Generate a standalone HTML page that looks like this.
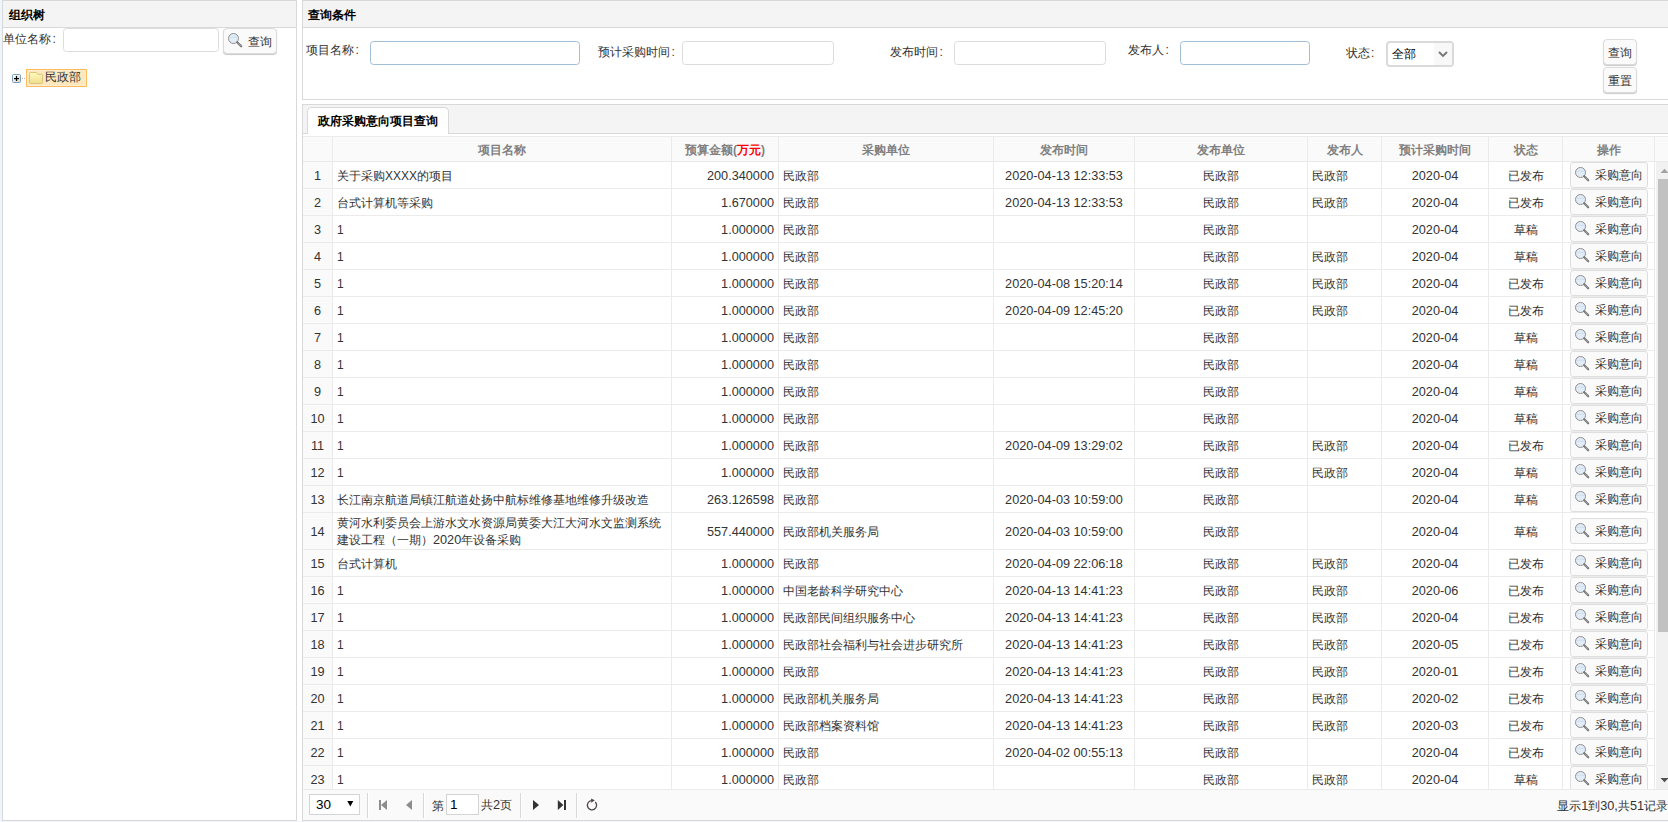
<!DOCTYPE html><html><head><meta charset="utf-8"><style>
*{box-sizing:border-box;margin:0;padding:0}
html,body{width:1668px;height:822px;overflow:hidden;background:#fff;font-family:"Liberation Sans",sans-serif;font-size:12px;color:#333}
.a{position:absolute}
.n{font-size:12.7px}
.pnl{position:absolute;background:#fff;border:1px solid #d9d9d9}
.ph{position:absolute;left:0;top:0;right:0;height:27px;background:#f4f4f4;border-bottom:1px solid #d9d9d9}
.pt{position:absolute;font-weight:bold;color:#000;line-height:14px;white-space:nowrap}
.lbl{position:absolute;line-height:14px;white-space:nowrap;color:#333}
.inp{position:absolute;border:1px solid #dcdcdc;border-radius:3.5px;background:#fff}
.inp.f{border-color:#a2bdd6}
.co{margin-left:1.5px}
.btn{position:absolute;border:1px solid #dcdcdc;border-radius:4px;background:#fafafa;box-shadow:0 1px 1px #c8c8c8;white-space:nowrap;line-height:14px;color:#333}
.hd{position:absolute;top:138px;height:24px;line-height:24px;text-align:center;font-weight:bold;color:#808080;white-space:nowrap;overflow:hidden}
.vl{position:absolute;width:1px;background:#ebebeb}
.hl{position:absolute;height:1px;background:#ebebeb}
.c{position:absolute;white-space:nowrap;overflow:hidden;color:#333;padding:0 4px}
.ob{position:absolute;border:1px solid #dedede;border-radius:3px;background:#fafafa;line-height:14px;white-space:nowrap;color:#333}
.mag{position:absolute}
.ps{position:absolute;width:1px;background:#d8d8d8;border-right:1px solid #fff;width:2px}
</style></head><body>

<div class="pnl" style="left:2px;top:0;width:295px;height:821px">
<div class="ph"></div>
<div class="pt" style="left:6px;top:7px">组织树</div>
<div class="lbl" style="left:0px;top:31px">单位名称<span class=co>:</span></div>
<div class="inp" style="left:60px;top:27px;width:156px;height:24px"></div>
<div class="btn" style="left:220px;top:27px;width:54px;height:26px"><svg class="mag" style="left:3px;top:3px" width="16" height="16" viewBox="0 0 16 16"><circle cx="6.5" cy="6.5" r="5" fill="#e2ecf7" stroke="#8e8e8e" stroke-width="1.0"/><path d="M3 5.5 Q6.5 4.6 10 5.5" stroke="#c6d9ec" stroke-width="0.8" fill="none"/><path d="M10.2 10.2 L14.2 14.3" stroke="#767676" stroke-width="2.2" stroke-linecap="round"/><path d="M10.9 10.9 L13.9 14" stroke="#d8d8e8" stroke-width="0.8" stroke-dasharray="0.7 0.9"/></svg><span style="position:absolute;left:24px;top:6px">查询</span></div>
</div>
<svg class="a" style="left:12px;top:74px" width="9" height="9" viewBox="0 0 9 9"><defs><linearGradient id="pg" x1="0" y1="0" x2="1" y2="1"><stop offset="0" stop-color="#ffffff"/><stop offset="1" stop-color="#dcd3c4"/></linearGradient></defs><rect x="0.5" y="0.5" width="8" height="8" rx="1" fill="url(#pg)" stroke="#7b9dc2" stroke-width="1"/><rect x="2" y="4" width="5" height="1.2" fill="#000"/><rect x="3.9" y="2" width="1.2" height="5" fill="#000"/></svg>
<div class="a" style="left:22px;top:78px;width:1px;height:1px;background:#b0b0b0"></div><div class="a" style="left:24px;top:78px;width:1px;height:1px;background:#b0b0b0"></div>
<div class="a" style="left:26px;top:69px;width:61px;height:18px;background:#fde8bd;border:1px solid #ffbb60;box-shadow:inset 0 0 0 1px #fdedd0"></div>
<svg class="a" style="left:29px;top:72px" width="14" height="12" viewBox="0 0 14 12"><defs><linearGradient id="fg" x1="0" y1="0" x2="0" y2="1"><stop offset="0" stop-color="#fffcc0"/><stop offset="1" stop-color="#f0dc8c"/></linearGradient></defs><path d="M0.5 1.3 Q0.5 0.5 1.3 0.5 L7.3 0.5 L8.6 2.3 L12.7 2.3 Q13.5 2.3 13.5 3.1 L13.5 10.7 Q13.5 11.5 12.7 11.5 L1.3 11.5 Q0.5 11.5 0.5 10.7 Z" fill="url(#fg)" stroke="#dcc47c" stroke-width="1"/></svg>
<div class="lbl" style="left:45.3px;top:70px">民政部</div>
<div class="pnl" style="left:302px;top:0;width:1380px;height:100px">
<div class="ph"></div>
<div class="pt" style="left:5px;top:7px">查询条件</div>
<div class="lbl" style="left:3px;top:41.5px">项目名称<span class=co>:</span></div>
<div class="inp f" style="left:67px;top:40px;width:210px;height:24px"></div>
<div class="lbl" style="left:295px;top:43.5px">预计采购时间<span class=co>:</span></div>
<div class="inp" style="left:379px;top:40px;width:152px;height:24px"></div>
<div class="lbl" style="left:587px;top:43.5px">发布时间<span class=co>:</span></div>
<div class="inp" style="left:651px;top:40px;width:152px;height:24px"></div>
<div class="lbl" style="left:825px;top:41.5px">发布人<span class=co>:</span></div>
<div class="inp f" style="left:877px;top:40px;width:130px;height:24px"></div>
<div class="lbl" style="left:1043px;top:45px">状态<span class=co style="margin-left:1px">:</span></div>
<div class="a" style="left:1083px;top:40px;width:68px;height:26px;border:2px solid #dadada;border-radius:4px;background:#fff"><div class="a" style="left:46px;top:0;width:18px;height:22px;background:#f8f8f8"></div><div class="lbl" style="left:4px;top:3.5px;color:#000">全部</div><svg class="a" style="left:50px;top:8px" width="11" height="7" viewBox="0 0 11 7"><path d="M1 1 L5 5 L9 1" stroke="#777" stroke-width="1.9" fill="none"/></svg></div>
<div class="btn" style="left:1300px;top:38px;width:34px;height:26px"><span style="position:absolute;left:4px;top:6px">查询</span></div>
<div class="btn" style="left:1300px;top:66px;width:34px;height:26px"><span style="position:absolute;left:4px;top:6px">重置</span></div>
</div>
<div class="pnl" style="left:302px;top:104px;width:1380px;height:717px;border-right:none"></div>
<div class="a" style="left:303px;top:105px;width:1365px;height:29px;background:#f4f4f4;border-bottom:1px solid #d9d9d9"></div>
<div class="a" style="left:307px;top:107px;width:142px;height:27px;background:#fff;border:1px solid #d9d9d9;border-bottom:none;border-radius:5px 5px 0 0"></div>
<div class="pt" style="left:318px;top:114px">政府采购意向项目查询</div>
<div class="a" style="left:303px;top:136px;width:1365px;height:26px;background:#fafafa;border-top:1px solid #ebebeb;border-bottom:1px solid #e9e9e9"></div>
<div class="hd" style="left:303px;width:29px"></div>
<div class="hd" style="left:333px;width:338px">项目名称</div>
<div class="hd" style="left:672px;width:106px">预算金额(<span style="color:#f00">万元</span>)</div>
<div class="hd" style="left:779px;width:214px">采购单位</div>
<div class="hd" style="left:994px;width:140px">发布时间</div>
<div class="hd" style="left:1135px;width:172px">发布单位</div>
<div class="hd" style="left:1308px;width:73px">发布人</div>
<div class="hd" style="left:1382px;width:106px">预计采购时间</div>
<div class="hd" style="left:1489px;width:73px">状态</div>
<div class="hd" style="left:1563px;width:91px">操作</div>
<div class="a" style="left:303px;top:162px;width:29px;height:627px;background:#fafafa"></div>
<div class="a" style="left:1655px;top:162px;width:13px;height:627px;background:#f1f1f1;border-left:1px solid #fff"></div>
<svg class="a" style="left:1660px;top:168px" width="8" height="5" viewBox="0 0 8 5"><path d="M0.5 5 L4.5 0.8 L8.5 5 Z" fill="#a3a3a3"/></svg>
<div class="a" style="left:1658px;top:179px;width:10px;height:453px;background:#c1c1c1"></div>
<svg class="a" style="left:1660px;top:778px" width="8" height="5" viewBox="0 0 8 5"><path d="M0.5 0 L4.5 4.2 L8.5 0 Z" fill="#505050"/></svg>
<div class="hl" style="left:303px;top:188px;width:1352px"></div>
<div class="hl" style="left:303px;top:215px;width:1352px"></div>
<div class="hl" style="left:303px;top:242px;width:1352px"></div>
<div class="hl" style="left:303px;top:269px;width:1352px"></div>
<div class="hl" style="left:303px;top:296px;width:1352px"></div>
<div class="hl" style="left:303px;top:323px;width:1352px"></div>
<div class="hl" style="left:303px;top:350px;width:1352px"></div>
<div class="hl" style="left:303px;top:377px;width:1352px"></div>
<div class="hl" style="left:303px;top:404px;width:1352px"></div>
<div class="hl" style="left:303px;top:431px;width:1352px"></div>
<div class="hl" style="left:303px;top:458px;width:1352px"></div>
<div class="hl" style="left:303px;top:485px;width:1352px"></div>
<div class="hl" style="left:303px;top:512px;width:1352px"></div>
<div class="hl" style="left:303px;top:549px;width:1352px"></div>
<div class="hl" style="left:303px;top:576px;width:1352px"></div>
<div class="hl" style="left:303px;top:603px;width:1352px"></div>
<div class="hl" style="left:303px;top:630px;width:1352px"></div>
<div class="hl" style="left:303px;top:657px;width:1352px"></div>
<div class="hl" style="left:303px;top:684px;width:1352px"></div>
<div class="hl" style="left:303px;top:711px;width:1352px"></div>
<div class="hl" style="left:303px;top:738px;width:1352px"></div>
<div class="hl" style="left:303px;top:765px;width:1352px"></div>
<div class="hl" style="left:303px;top:792px;width:1352px"></div>
<div class="vl" style="left:332px;top:137px;height:652px;"></div>
<div class="vl" style="left:671px;top:137px;height:652px;"></div>
<div class="vl" style="left:778px;top:137px;height:652px;"></div>
<div class="vl" style="left:993px;top:137px;height:652px;"></div>
<div class="vl" style="left:1134px;top:137px;height:652px;"></div>
<div class="vl" style="left:1307px;top:137px;height:652px;"></div>
<div class="vl" style="left:1381px;top:137px;height:652px;"></div>
<div class="vl" style="left:1488px;top:137px;height:652px;"></div>
<div class="vl" style="left:1562px;top:137px;height:652px;"></div>
<div class="vl" style="left:1654px;top:137px;height:652px;"></div>
<div class="c" style="left:303px;top:163px;width:29px;height:25px;line-height:26px;text-align:center"><span class=n>1</span></div>
<div class="c" style="left:333px;top:163px;width:338px;height:25px;line-height:26px;text-align:left">关于采购XXXX的项目</div>
<div class="c" style="left:672px;top:163px;width:106px;height:25px;line-height:26px;text-align:right"><span class=n>200.340000</span></div>
<div class="c" style="left:779px;top:163px;width:214px;height:25px;line-height:26px;text-align:left">民政部</div>
<div class="c" style="left:994px;top:163px;width:140px;height:25px;line-height:26px;text-align:center"><span class=n>2020-04-13 12:33:53</span></div>
<div class="c" style="left:1135px;top:163px;width:172px;height:25px;line-height:26px;text-align:center">民政部</div>
<div class="c" style="left:1308px;top:163px;width:73px;height:25px;line-height:26px;text-align:left">民政部</div>
<div class="c" style="left:1382px;top:163px;width:106px;height:25px;line-height:26px;text-align:center"><span class=n>2020-04</span></div>
<div class="c" style="left:1489px;top:163px;width:73px;height:25px;line-height:26px;text-align:center">已发布</div>
<div class="ob" style="left:1570px;top:162px;width:78px;height:26px"><svg class="mag" style="left:3px;top:3px" width="16" height="16" viewBox="0 0 16 16"><circle cx="6.5" cy="6.5" r="5" fill="#e2ecf7" stroke="#8e8e8e" stroke-width="1.0"/><path d="M3 5.5 Q6.5 4.6 10 5.5" stroke="#c6d9ec" stroke-width="0.8" fill="none"/><path d="M10.2 10.2 L14.2 14.3" stroke="#767676" stroke-width="2.2" stroke-linecap="round"/><path d="M10.9 10.9 L13.9 14" stroke="#d8d8e8" stroke-width="0.8" stroke-dasharray="0.7 0.9"/></svg><span style="position:absolute;left:24px;top:5px">采购意向</span></div>
<div class="c" style="left:303px;top:190px;width:29px;height:25px;line-height:26px;text-align:center"><span class=n>2</span></div>
<div class="c" style="left:333px;top:190px;width:338px;height:25px;line-height:26px;text-align:left">台式计算机等采购</div>
<div class="c" style="left:672px;top:190px;width:106px;height:25px;line-height:26px;text-align:right"><span class=n>1.670000</span></div>
<div class="c" style="left:779px;top:190px;width:214px;height:25px;line-height:26px;text-align:left">民政部</div>
<div class="c" style="left:994px;top:190px;width:140px;height:25px;line-height:26px;text-align:center"><span class=n>2020-04-13 12:33:53</span></div>
<div class="c" style="left:1135px;top:190px;width:172px;height:25px;line-height:26px;text-align:center">民政部</div>
<div class="c" style="left:1308px;top:190px;width:73px;height:25px;line-height:26px;text-align:left">民政部</div>
<div class="c" style="left:1382px;top:190px;width:106px;height:25px;line-height:26px;text-align:center"><span class=n>2020-04</span></div>
<div class="c" style="left:1489px;top:190px;width:73px;height:25px;line-height:26px;text-align:center">已发布</div>
<div class="ob" style="left:1570px;top:189px;width:78px;height:26px"><svg class="mag" style="left:3px;top:3px" width="16" height="16" viewBox="0 0 16 16"><circle cx="6.5" cy="6.5" r="5" fill="#e2ecf7" stroke="#8e8e8e" stroke-width="1.0"/><path d="M3 5.5 Q6.5 4.6 10 5.5" stroke="#c6d9ec" stroke-width="0.8" fill="none"/><path d="M10.2 10.2 L14.2 14.3" stroke="#767676" stroke-width="2.2" stroke-linecap="round"/><path d="M10.9 10.9 L13.9 14" stroke="#d8d8e8" stroke-width="0.8" stroke-dasharray="0.7 0.9"/></svg><span style="position:absolute;left:24px;top:5px">采购意向</span></div>
<div class="c" style="left:303px;top:217px;width:29px;height:25px;line-height:26px;text-align:center"><span class=n>3</span></div>
<div class="c" style="left:333px;top:217px;width:338px;height:25px;line-height:26px;text-align:left">1</div>
<div class="c" style="left:672px;top:217px;width:106px;height:25px;line-height:26px;text-align:right"><span class=n>1.000000</span></div>
<div class="c" style="left:779px;top:217px;width:214px;height:25px;line-height:26px;text-align:left">民政部</div>
<div class="c" style="left:994px;top:217px;width:140px;height:25px;line-height:26px;text-align:center"></div>
<div class="c" style="left:1135px;top:217px;width:172px;height:25px;line-height:26px;text-align:center">民政部</div>
<div class="c" style="left:1308px;top:217px;width:73px;height:25px;line-height:26px;text-align:left"></div>
<div class="c" style="left:1382px;top:217px;width:106px;height:25px;line-height:26px;text-align:center"><span class=n>2020-04</span></div>
<div class="c" style="left:1489px;top:217px;width:73px;height:25px;line-height:26px;text-align:center">草稿</div>
<div class="ob" style="left:1570px;top:216px;width:78px;height:26px"><svg class="mag" style="left:3px;top:3px" width="16" height="16" viewBox="0 0 16 16"><circle cx="6.5" cy="6.5" r="5" fill="#e2ecf7" stroke="#8e8e8e" stroke-width="1.0"/><path d="M3 5.5 Q6.5 4.6 10 5.5" stroke="#c6d9ec" stroke-width="0.8" fill="none"/><path d="M10.2 10.2 L14.2 14.3" stroke="#767676" stroke-width="2.2" stroke-linecap="round"/><path d="M10.9 10.9 L13.9 14" stroke="#d8d8e8" stroke-width="0.8" stroke-dasharray="0.7 0.9"/></svg><span style="position:absolute;left:24px;top:5px">采购意向</span></div>
<div class="c" style="left:303px;top:244px;width:29px;height:25px;line-height:26px;text-align:center"><span class=n>4</span></div>
<div class="c" style="left:333px;top:244px;width:338px;height:25px;line-height:26px;text-align:left">1</div>
<div class="c" style="left:672px;top:244px;width:106px;height:25px;line-height:26px;text-align:right"><span class=n>1.000000</span></div>
<div class="c" style="left:779px;top:244px;width:214px;height:25px;line-height:26px;text-align:left">民政部</div>
<div class="c" style="left:994px;top:244px;width:140px;height:25px;line-height:26px;text-align:center"></div>
<div class="c" style="left:1135px;top:244px;width:172px;height:25px;line-height:26px;text-align:center">民政部</div>
<div class="c" style="left:1308px;top:244px;width:73px;height:25px;line-height:26px;text-align:left">民政部</div>
<div class="c" style="left:1382px;top:244px;width:106px;height:25px;line-height:26px;text-align:center"><span class=n>2020-04</span></div>
<div class="c" style="left:1489px;top:244px;width:73px;height:25px;line-height:26px;text-align:center">草稿</div>
<div class="ob" style="left:1570px;top:243px;width:78px;height:26px"><svg class="mag" style="left:3px;top:3px" width="16" height="16" viewBox="0 0 16 16"><circle cx="6.5" cy="6.5" r="5" fill="#e2ecf7" stroke="#8e8e8e" stroke-width="1.0"/><path d="M3 5.5 Q6.5 4.6 10 5.5" stroke="#c6d9ec" stroke-width="0.8" fill="none"/><path d="M10.2 10.2 L14.2 14.3" stroke="#767676" stroke-width="2.2" stroke-linecap="round"/><path d="M10.9 10.9 L13.9 14" stroke="#d8d8e8" stroke-width="0.8" stroke-dasharray="0.7 0.9"/></svg><span style="position:absolute;left:24px;top:5px">采购意向</span></div>
<div class="c" style="left:303px;top:271px;width:29px;height:25px;line-height:26px;text-align:center"><span class=n>5</span></div>
<div class="c" style="left:333px;top:271px;width:338px;height:25px;line-height:26px;text-align:left">1</div>
<div class="c" style="left:672px;top:271px;width:106px;height:25px;line-height:26px;text-align:right"><span class=n>1.000000</span></div>
<div class="c" style="left:779px;top:271px;width:214px;height:25px;line-height:26px;text-align:left">民政部</div>
<div class="c" style="left:994px;top:271px;width:140px;height:25px;line-height:26px;text-align:center"><span class=n>2020-04-08 15:20:14</span></div>
<div class="c" style="left:1135px;top:271px;width:172px;height:25px;line-height:26px;text-align:center">民政部</div>
<div class="c" style="left:1308px;top:271px;width:73px;height:25px;line-height:26px;text-align:left">民政部</div>
<div class="c" style="left:1382px;top:271px;width:106px;height:25px;line-height:26px;text-align:center"><span class=n>2020-04</span></div>
<div class="c" style="left:1489px;top:271px;width:73px;height:25px;line-height:26px;text-align:center">已发布</div>
<div class="ob" style="left:1570px;top:270px;width:78px;height:26px"><svg class="mag" style="left:3px;top:3px" width="16" height="16" viewBox="0 0 16 16"><circle cx="6.5" cy="6.5" r="5" fill="#e2ecf7" stroke="#8e8e8e" stroke-width="1.0"/><path d="M3 5.5 Q6.5 4.6 10 5.5" stroke="#c6d9ec" stroke-width="0.8" fill="none"/><path d="M10.2 10.2 L14.2 14.3" stroke="#767676" stroke-width="2.2" stroke-linecap="round"/><path d="M10.9 10.9 L13.9 14" stroke="#d8d8e8" stroke-width="0.8" stroke-dasharray="0.7 0.9"/></svg><span style="position:absolute;left:24px;top:5px">采购意向</span></div>
<div class="c" style="left:303px;top:298px;width:29px;height:25px;line-height:26px;text-align:center"><span class=n>6</span></div>
<div class="c" style="left:333px;top:298px;width:338px;height:25px;line-height:26px;text-align:left">1</div>
<div class="c" style="left:672px;top:298px;width:106px;height:25px;line-height:26px;text-align:right"><span class=n>1.000000</span></div>
<div class="c" style="left:779px;top:298px;width:214px;height:25px;line-height:26px;text-align:left">民政部</div>
<div class="c" style="left:994px;top:298px;width:140px;height:25px;line-height:26px;text-align:center"><span class=n>2020-04-09 12:45:20</span></div>
<div class="c" style="left:1135px;top:298px;width:172px;height:25px;line-height:26px;text-align:center">民政部</div>
<div class="c" style="left:1308px;top:298px;width:73px;height:25px;line-height:26px;text-align:left">民政部</div>
<div class="c" style="left:1382px;top:298px;width:106px;height:25px;line-height:26px;text-align:center"><span class=n>2020-04</span></div>
<div class="c" style="left:1489px;top:298px;width:73px;height:25px;line-height:26px;text-align:center">已发布</div>
<div class="ob" style="left:1570px;top:297px;width:78px;height:26px"><svg class="mag" style="left:3px;top:3px" width="16" height="16" viewBox="0 0 16 16"><circle cx="6.5" cy="6.5" r="5" fill="#e2ecf7" stroke="#8e8e8e" stroke-width="1.0"/><path d="M3 5.5 Q6.5 4.6 10 5.5" stroke="#c6d9ec" stroke-width="0.8" fill="none"/><path d="M10.2 10.2 L14.2 14.3" stroke="#767676" stroke-width="2.2" stroke-linecap="round"/><path d="M10.9 10.9 L13.9 14" stroke="#d8d8e8" stroke-width="0.8" stroke-dasharray="0.7 0.9"/></svg><span style="position:absolute;left:24px;top:5px">采购意向</span></div>
<div class="c" style="left:303px;top:325px;width:29px;height:25px;line-height:26px;text-align:center"><span class=n>7</span></div>
<div class="c" style="left:333px;top:325px;width:338px;height:25px;line-height:26px;text-align:left">1</div>
<div class="c" style="left:672px;top:325px;width:106px;height:25px;line-height:26px;text-align:right"><span class=n>1.000000</span></div>
<div class="c" style="left:779px;top:325px;width:214px;height:25px;line-height:26px;text-align:left">民政部</div>
<div class="c" style="left:994px;top:325px;width:140px;height:25px;line-height:26px;text-align:center"></div>
<div class="c" style="left:1135px;top:325px;width:172px;height:25px;line-height:26px;text-align:center">民政部</div>
<div class="c" style="left:1308px;top:325px;width:73px;height:25px;line-height:26px;text-align:left"></div>
<div class="c" style="left:1382px;top:325px;width:106px;height:25px;line-height:26px;text-align:center"><span class=n>2020-04</span></div>
<div class="c" style="left:1489px;top:325px;width:73px;height:25px;line-height:26px;text-align:center">草稿</div>
<div class="ob" style="left:1570px;top:324px;width:78px;height:26px"><svg class="mag" style="left:3px;top:3px" width="16" height="16" viewBox="0 0 16 16"><circle cx="6.5" cy="6.5" r="5" fill="#e2ecf7" stroke="#8e8e8e" stroke-width="1.0"/><path d="M3 5.5 Q6.5 4.6 10 5.5" stroke="#c6d9ec" stroke-width="0.8" fill="none"/><path d="M10.2 10.2 L14.2 14.3" stroke="#767676" stroke-width="2.2" stroke-linecap="round"/><path d="M10.9 10.9 L13.9 14" stroke="#d8d8e8" stroke-width="0.8" stroke-dasharray="0.7 0.9"/></svg><span style="position:absolute;left:24px;top:5px">采购意向</span></div>
<div class="c" style="left:303px;top:352px;width:29px;height:25px;line-height:26px;text-align:center"><span class=n>8</span></div>
<div class="c" style="left:333px;top:352px;width:338px;height:25px;line-height:26px;text-align:left">1</div>
<div class="c" style="left:672px;top:352px;width:106px;height:25px;line-height:26px;text-align:right"><span class=n>1.000000</span></div>
<div class="c" style="left:779px;top:352px;width:214px;height:25px;line-height:26px;text-align:left">民政部</div>
<div class="c" style="left:994px;top:352px;width:140px;height:25px;line-height:26px;text-align:center"></div>
<div class="c" style="left:1135px;top:352px;width:172px;height:25px;line-height:26px;text-align:center">民政部</div>
<div class="c" style="left:1308px;top:352px;width:73px;height:25px;line-height:26px;text-align:left"></div>
<div class="c" style="left:1382px;top:352px;width:106px;height:25px;line-height:26px;text-align:center"><span class=n>2020-04</span></div>
<div class="c" style="left:1489px;top:352px;width:73px;height:25px;line-height:26px;text-align:center">草稿</div>
<div class="ob" style="left:1570px;top:351px;width:78px;height:26px"><svg class="mag" style="left:3px;top:3px" width="16" height="16" viewBox="0 0 16 16"><circle cx="6.5" cy="6.5" r="5" fill="#e2ecf7" stroke="#8e8e8e" stroke-width="1.0"/><path d="M3 5.5 Q6.5 4.6 10 5.5" stroke="#c6d9ec" stroke-width="0.8" fill="none"/><path d="M10.2 10.2 L14.2 14.3" stroke="#767676" stroke-width="2.2" stroke-linecap="round"/><path d="M10.9 10.9 L13.9 14" stroke="#d8d8e8" stroke-width="0.8" stroke-dasharray="0.7 0.9"/></svg><span style="position:absolute;left:24px;top:5px">采购意向</span></div>
<div class="c" style="left:303px;top:379px;width:29px;height:25px;line-height:26px;text-align:center"><span class=n>9</span></div>
<div class="c" style="left:333px;top:379px;width:338px;height:25px;line-height:26px;text-align:left">1</div>
<div class="c" style="left:672px;top:379px;width:106px;height:25px;line-height:26px;text-align:right"><span class=n>1.000000</span></div>
<div class="c" style="left:779px;top:379px;width:214px;height:25px;line-height:26px;text-align:left">民政部</div>
<div class="c" style="left:994px;top:379px;width:140px;height:25px;line-height:26px;text-align:center"></div>
<div class="c" style="left:1135px;top:379px;width:172px;height:25px;line-height:26px;text-align:center">民政部</div>
<div class="c" style="left:1308px;top:379px;width:73px;height:25px;line-height:26px;text-align:left"></div>
<div class="c" style="left:1382px;top:379px;width:106px;height:25px;line-height:26px;text-align:center"><span class=n>2020-04</span></div>
<div class="c" style="left:1489px;top:379px;width:73px;height:25px;line-height:26px;text-align:center">草稿</div>
<div class="ob" style="left:1570px;top:378px;width:78px;height:26px"><svg class="mag" style="left:3px;top:3px" width="16" height="16" viewBox="0 0 16 16"><circle cx="6.5" cy="6.5" r="5" fill="#e2ecf7" stroke="#8e8e8e" stroke-width="1.0"/><path d="M3 5.5 Q6.5 4.6 10 5.5" stroke="#c6d9ec" stroke-width="0.8" fill="none"/><path d="M10.2 10.2 L14.2 14.3" stroke="#767676" stroke-width="2.2" stroke-linecap="round"/><path d="M10.9 10.9 L13.9 14" stroke="#d8d8e8" stroke-width="0.8" stroke-dasharray="0.7 0.9"/></svg><span style="position:absolute;left:24px;top:5px">采购意向</span></div>
<div class="c" style="left:303px;top:406px;width:29px;height:25px;line-height:26px;text-align:center"><span class=n>10</span></div>
<div class="c" style="left:333px;top:406px;width:338px;height:25px;line-height:26px;text-align:left">1</div>
<div class="c" style="left:672px;top:406px;width:106px;height:25px;line-height:26px;text-align:right"><span class=n>1.000000</span></div>
<div class="c" style="left:779px;top:406px;width:214px;height:25px;line-height:26px;text-align:left">民政部</div>
<div class="c" style="left:994px;top:406px;width:140px;height:25px;line-height:26px;text-align:center"></div>
<div class="c" style="left:1135px;top:406px;width:172px;height:25px;line-height:26px;text-align:center">民政部</div>
<div class="c" style="left:1308px;top:406px;width:73px;height:25px;line-height:26px;text-align:left"></div>
<div class="c" style="left:1382px;top:406px;width:106px;height:25px;line-height:26px;text-align:center"><span class=n>2020-04</span></div>
<div class="c" style="left:1489px;top:406px;width:73px;height:25px;line-height:26px;text-align:center">草稿</div>
<div class="ob" style="left:1570px;top:405px;width:78px;height:26px"><svg class="mag" style="left:3px;top:3px" width="16" height="16" viewBox="0 0 16 16"><circle cx="6.5" cy="6.5" r="5" fill="#e2ecf7" stroke="#8e8e8e" stroke-width="1.0"/><path d="M3 5.5 Q6.5 4.6 10 5.5" stroke="#c6d9ec" stroke-width="0.8" fill="none"/><path d="M10.2 10.2 L14.2 14.3" stroke="#767676" stroke-width="2.2" stroke-linecap="round"/><path d="M10.9 10.9 L13.9 14" stroke="#d8d8e8" stroke-width="0.8" stroke-dasharray="0.7 0.9"/></svg><span style="position:absolute;left:24px;top:5px">采购意向</span></div>
<div class="c" style="left:303px;top:433px;width:29px;height:25px;line-height:26px;text-align:center"><span class=n>11</span></div>
<div class="c" style="left:333px;top:433px;width:338px;height:25px;line-height:26px;text-align:left">1</div>
<div class="c" style="left:672px;top:433px;width:106px;height:25px;line-height:26px;text-align:right"><span class=n>1.000000</span></div>
<div class="c" style="left:779px;top:433px;width:214px;height:25px;line-height:26px;text-align:left">民政部</div>
<div class="c" style="left:994px;top:433px;width:140px;height:25px;line-height:26px;text-align:center"><span class=n>2020-04-09 13:29:02</span></div>
<div class="c" style="left:1135px;top:433px;width:172px;height:25px;line-height:26px;text-align:center">民政部</div>
<div class="c" style="left:1308px;top:433px;width:73px;height:25px;line-height:26px;text-align:left">民政部</div>
<div class="c" style="left:1382px;top:433px;width:106px;height:25px;line-height:26px;text-align:center"><span class=n>2020-04</span></div>
<div class="c" style="left:1489px;top:433px;width:73px;height:25px;line-height:26px;text-align:center">已发布</div>
<div class="ob" style="left:1570px;top:432px;width:78px;height:26px"><svg class="mag" style="left:3px;top:3px" width="16" height="16" viewBox="0 0 16 16"><circle cx="6.5" cy="6.5" r="5" fill="#e2ecf7" stroke="#8e8e8e" stroke-width="1.0"/><path d="M3 5.5 Q6.5 4.6 10 5.5" stroke="#c6d9ec" stroke-width="0.8" fill="none"/><path d="M10.2 10.2 L14.2 14.3" stroke="#767676" stroke-width="2.2" stroke-linecap="round"/><path d="M10.9 10.9 L13.9 14" stroke="#d8d8e8" stroke-width="0.8" stroke-dasharray="0.7 0.9"/></svg><span style="position:absolute;left:24px;top:5px">采购意向</span></div>
<div class="c" style="left:303px;top:460px;width:29px;height:25px;line-height:26px;text-align:center"><span class=n>12</span></div>
<div class="c" style="left:333px;top:460px;width:338px;height:25px;line-height:26px;text-align:left">1</div>
<div class="c" style="left:672px;top:460px;width:106px;height:25px;line-height:26px;text-align:right"><span class=n>1.000000</span></div>
<div class="c" style="left:779px;top:460px;width:214px;height:25px;line-height:26px;text-align:left">民政部</div>
<div class="c" style="left:994px;top:460px;width:140px;height:25px;line-height:26px;text-align:center"></div>
<div class="c" style="left:1135px;top:460px;width:172px;height:25px;line-height:26px;text-align:center">民政部</div>
<div class="c" style="left:1308px;top:460px;width:73px;height:25px;line-height:26px;text-align:left">民政部</div>
<div class="c" style="left:1382px;top:460px;width:106px;height:25px;line-height:26px;text-align:center"><span class=n>2020-04</span></div>
<div class="c" style="left:1489px;top:460px;width:73px;height:25px;line-height:26px;text-align:center">草稿</div>
<div class="ob" style="left:1570px;top:459px;width:78px;height:26px"><svg class="mag" style="left:3px;top:3px" width="16" height="16" viewBox="0 0 16 16"><circle cx="6.5" cy="6.5" r="5" fill="#e2ecf7" stroke="#8e8e8e" stroke-width="1.0"/><path d="M3 5.5 Q6.5 4.6 10 5.5" stroke="#c6d9ec" stroke-width="0.8" fill="none"/><path d="M10.2 10.2 L14.2 14.3" stroke="#767676" stroke-width="2.2" stroke-linecap="round"/><path d="M10.9 10.9 L13.9 14" stroke="#d8d8e8" stroke-width="0.8" stroke-dasharray="0.7 0.9"/></svg><span style="position:absolute;left:24px;top:5px">采购意向</span></div>
<div class="c" style="left:303px;top:487px;width:29px;height:25px;line-height:26px;text-align:center"><span class=n>13</span></div>
<div class="c" style="left:333px;top:487px;width:338px;height:25px;line-height:26px;text-align:left">长江南京航道局镇江航道处扬中航标维修基地维修升级改造</div>
<div class="c" style="left:672px;top:487px;width:106px;height:25px;line-height:26px;text-align:right"><span class=n>263.126598</span></div>
<div class="c" style="left:779px;top:487px;width:214px;height:25px;line-height:26px;text-align:left">民政部</div>
<div class="c" style="left:994px;top:487px;width:140px;height:25px;line-height:26px;text-align:center"><span class=n>2020-04-03 10:59:00</span></div>
<div class="c" style="left:1135px;top:487px;width:172px;height:25px;line-height:26px;text-align:center">民政部</div>
<div class="c" style="left:1308px;top:487px;width:73px;height:25px;line-height:26px;text-align:left"></div>
<div class="c" style="left:1382px;top:487px;width:106px;height:25px;line-height:26px;text-align:center"><span class=n>2020-04</span></div>
<div class="c" style="left:1489px;top:487px;width:73px;height:25px;line-height:26px;text-align:center">草稿</div>
<div class="ob" style="left:1570px;top:486px;width:78px;height:26px"><svg class="mag" style="left:3px;top:3px" width="16" height="16" viewBox="0 0 16 16"><circle cx="6.5" cy="6.5" r="5" fill="#e2ecf7" stroke="#8e8e8e" stroke-width="1.0"/><path d="M3 5.5 Q6.5 4.6 10 5.5" stroke="#c6d9ec" stroke-width="0.8" fill="none"/><path d="M10.2 10.2 L14.2 14.3" stroke="#767676" stroke-width="2.2" stroke-linecap="round"/><path d="M10.9 10.9 L13.9 14" stroke="#d8d8e8" stroke-width="0.8" stroke-dasharray="0.7 0.9"/></svg><span style="position:absolute;left:24px;top:5px">采购意向</span></div>
<div class="c" style="left:303px;top:514px;width:29px;height:35px;line-height:36px;text-align:center"><span class=n>14</span></div>
<div class="c" style="left:333px;top:515px;width:338px;height:34px;line-height:17px;text-align:left">黄河水利委员会上游水文水资源局黄委大江大河水文监测系统<br>建设工程（一期）<span class=n>2020</span>年设备采购</div>
<div class="c" style="left:672px;top:514px;width:106px;height:35px;line-height:36px;text-align:right"><span class=n>557.440000</span></div>
<div class="c" style="left:779px;top:514px;width:214px;height:35px;line-height:36px;text-align:left">民政部机关服务局</div>
<div class="c" style="left:994px;top:514px;width:140px;height:35px;line-height:36px;text-align:center"><span class=n>2020-04-03 10:59:00</span></div>
<div class="c" style="left:1135px;top:514px;width:172px;height:35px;line-height:36px;text-align:center">民政部</div>
<div class="c" style="left:1308px;top:514px;width:73px;height:35px;line-height:36px;text-align:left"></div>
<div class="c" style="left:1382px;top:514px;width:106px;height:35px;line-height:36px;text-align:center"><span class=n>2020-04</span></div>
<div class="c" style="left:1489px;top:514px;width:73px;height:35px;line-height:36px;text-align:center">草稿</div>
<div class="ob" style="left:1570px;top:518px;width:78px;height:26px"><svg class="mag" style="left:3px;top:3px" width="16" height="16" viewBox="0 0 16 16"><circle cx="6.5" cy="6.5" r="5" fill="#e2ecf7" stroke="#8e8e8e" stroke-width="1.0"/><path d="M3 5.5 Q6.5 4.6 10 5.5" stroke="#c6d9ec" stroke-width="0.8" fill="none"/><path d="M10.2 10.2 L14.2 14.3" stroke="#767676" stroke-width="2.2" stroke-linecap="round"/><path d="M10.9 10.9 L13.9 14" stroke="#d8d8e8" stroke-width="0.8" stroke-dasharray="0.7 0.9"/></svg><span style="position:absolute;left:24px;top:5px">采购意向</span></div>
<div class="c" style="left:303px;top:551px;width:29px;height:25px;line-height:26px;text-align:center"><span class=n>15</span></div>
<div class="c" style="left:333px;top:551px;width:338px;height:25px;line-height:26px;text-align:left">台式计算机</div>
<div class="c" style="left:672px;top:551px;width:106px;height:25px;line-height:26px;text-align:right"><span class=n>1.000000</span></div>
<div class="c" style="left:779px;top:551px;width:214px;height:25px;line-height:26px;text-align:left">民政部</div>
<div class="c" style="left:994px;top:551px;width:140px;height:25px;line-height:26px;text-align:center"><span class=n>2020-04-09 22:06:18</span></div>
<div class="c" style="left:1135px;top:551px;width:172px;height:25px;line-height:26px;text-align:center">民政部</div>
<div class="c" style="left:1308px;top:551px;width:73px;height:25px;line-height:26px;text-align:left">民政部</div>
<div class="c" style="left:1382px;top:551px;width:106px;height:25px;line-height:26px;text-align:center"><span class=n>2020-04</span></div>
<div class="c" style="left:1489px;top:551px;width:73px;height:25px;line-height:26px;text-align:center">已发布</div>
<div class="ob" style="left:1570px;top:550px;width:78px;height:26px"><svg class="mag" style="left:3px;top:3px" width="16" height="16" viewBox="0 0 16 16"><circle cx="6.5" cy="6.5" r="5" fill="#e2ecf7" stroke="#8e8e8e" stroke-width="1.0"/><path d="M3 5.5 Q6.5 4.6 10 5.5" stroke="#c6d9ec" stroke-width="0.8" fill="none"/><path d="M10.2 10.2 L14.2 14.3" stroke="#767676" stroke-width="2.2" stroke-linecap="round"/><path d="M10.9 10.9 L13.9 14" stroke="#d8d8e8" stroke-width="0.8" stroke-dasharray="0.7 0.9"/></svg><span style="position:absolute;left:24px;top:5px">采购意向</span></div>
<div class="c" style="left:303px;top:578px;width:29px;height:25px;line-height:26px;text-align:center"><span class=n>16</span></div>
<div class="c" style="left:333px;top:578px;width:338px;height:25px;line-height:26px;text-align:left">1</div>
<div class="c" style="left:672px;top:578px;width:106px;height:25px;line-height:26px;text-align:right"><span class=n>1.000000</span></div>
<div class="c" style="left:779px;top:578px;width:214px;height:25px;line-height:26px;text-align:left">中国老龄科学研究中心</div>
<div class="c" style="left:994px;top:578px;width:140px;height:25px;line-height:26px;text-align:center"><span class=n>2020-04-13 14:41:23</span></div>
<div class="c" style="left:1135px;top:578px;width:172px;height:25px;line-height:26px;text-align:center">民政部</div>
<div class="c" style="left:1308px;top:578px;width:73px;height:25px;line-height:26px;text-align:left">民政部</div>
<div class="c" style="left:1382px;top:578px;width:106px;height:25px;line-height:26px;text-align:center"><span class=n>2020-06</span></div>
<div class="c" style="left:1489px;top:578px;width:73px;height:25px;line-height:26px;text-align:center">已发布</div>
<div class="ob" style="left:1570px;top:577px;width:78px;height:26px"><svg class="mag" style="left:3px;top:3px" width="16" height="16" viewBox="0 0 16 16"><circle cx="6.5" cy="6.5" r="5" fill="#e2ecf7" stroke="#8e8e8e" stroke-width="1.0"/><path d="M3 5.5 Q6.5 4.6 10 5.5" stroke="#c6d9ec" stroke-width="0.8" fill="none"/><path d="M10.2 10.2 L14.2 14.3" stroke="#767676" stroke-width="2.2" stroke-linecap="round"/><path d="M10.9 10.9 L13.9 14" stroke="#d8d8e8" stroke-width="0.8" stroke-dasharray="0.7 0.9"/></svg><span style="position:absolute;left:24px;top:5px">采购意向</span></div>
<div class="c" style="left:303px;top:605px;width:29px;height:25px;line-height:26px;text-align:center"><span class=n>17</span></div>
<div class="c" style="left:333px;top:605px;width:338px;height:25px;line-height:26px;text-align:left">1</div>
<div class="c" style="left:672px;top:605px;width:106px;height:25px;line-height:26px;text-align:right"><span class=n>1.000000</span></div>
<div class="c" style="left:779px;top:605px;width:214px;height:25px;line-height:26px;text-align:left">民政部民间组织服务中心</div>
<div class="c" style="left:994px;top:605px;width:140px;height:25px;line-height:26px;text-align:center"><span class=n>2020-04-13 14:41:23</span></div>
<div class="c" style="left:1135px;top:605px;width:172px;height:25px;line-height:26px;text-align:center">民政部</div>
<div class="c" style="left:1308px;top:605px;width:73px;height:25px;line-height:26px;text-align:left">民政部</div>
<div class="c" style="left:1382px;top:605px;width:106px;height:25px;line-height:26px;text-align:center"><span class=n>2020-04</span></div>
<div class="c" style="left:1489px;top:605px;width:73px;height:25px;line-height:26px;text-align:center">已发布</div>
<div class="ob" style="left:1570px;top:604px;width:78px;height:26px"><svg class="mag" style="left:3px;top:3px" width="16" height="16" viewBox="0 0 16 16"><circle cx="6.5" cy="6.5" r="5" fill="#e2ecf7" stroke="#8e8e8e" stroke-width="1.0"/><path d="M3 5.5 Q6.5 4.6 10 5.5" stroke="#c6d9ec" stroke-width="0.8" fill="none"/><path d="M10.2 10.2 L14.2 14.3" stroke="#767676" stroke-width="2.2" stroke-linecap="round"/><path d="M10.9 10.9 L13.9 14" stroke="#d8d8e8" stroke-width="0.8" stroke-dasharray="0.7 0.9"/></svg><span style="position:absolute;left:24px;top:5px">采购意向</span></div>
<div class="c" style="left:303px;top:632px;width:29px;height:25px;line-height:26px;text-align:center"><span class=n>18</span></div>
<div class="c" style="left:333px;top:632px;width:338px;height:25px;line-height:26px;text-align:left">1</div>
<div class="c" style="left:672px;top:632px;width:106px;height:25px;line-height:26px;text-align:right"><span class=n>1.000000</span></div>
<div class="c" style="left:779px;top:632px;width:214px;height:25px;line-height:26px;text-align:left">民政部社会福利与社会进步研究所</div>
<div class="c" style="left:994px;top:632px;width:140px;height:25px;line-height:26px;text-align:center"><span class=n>2020-04-13 14:41:23</span></div>
<div class="c" style="left:1135px;top:632px;width:172px;height:25px;line-height:26px;text-align:center">民政部</div>
<div class="c" style="left:1308px;top:632px;width:73px;height:25px;line-height:26px;text-align:left">民政部</div>
<div class="c" style="left:1382px;top:632px;width:106px;height:25px;line-height:26px;text-align:center"><span class=n>2020-05</span></div>
<div class="c" style="left:1489px;top:632px;width:73px;height:25px;line-height:26px;text-align:center">已发布</div>
<div class="ob" style="left:1570px;top:631px;width:78px;height:26px"><svg class="mag" style="left:3px;top:3px" width="16" height="16" viewBox="0 0 16 16"><circle cx="6.5" cy="6.5" r="5" fill="#e2ecf7" stroke="#8e8e8e" stroke-width="1.0"/><path d="M3 5.5 Q6.5 4.6 10 5.5" stroke="#c6d9ec" stroke-width="0.8" fill="none"/><path d="M10.2 10.2 L14.2 14.3" stroke="#767676" stroke-width="2.2" stroke-linecap="round"/><path d="M10.9 10.9 L13.9 14" stroke="#d8d8e8" stroke-width="0.8" stroke-dasharray="0.7 0.9"/></svg><span style="position:absolute;left:24px;top:5px">采购意向</span></div>
<div class="c" style="left:303px;top:659px;width:29px;height:25px;line-height:26px;text-align:center"><span class=n>19</span></div>
<div class="c" style="left:333px;top:659px;width:338px;height:25px;line-height:26px;text-align:left">1</div>
<div class="c" style="left:672px;top:659px;width:106px;height:25px;line-height:26px;text-align:right"><span class=n>1.000000</span></div>
<div class="c" style="left:779px;top:659px;width:214px;height:25px;line-height:26px;text-align:left">民政部</div>
<div class="c" style="left:994px;top:659px;width:140px;height:25px;line-height:26px;text-align:center"><span class=n>2020-04-13 14:41:23</span></div>
<div class="c" style="left:1135px;top:659px;width:172px;height:25px;line-height:26px;text-align:center">民政部</div>
<div class="c" style="left:1308px;top:659px;width:73px;height:25px;line-height:26px;text-align:left">民政部</div>
<div class="c" style="left:1382px;top:659px;width:106px;height:25px;line-height:26px;text-align:center"><span class=n>2020-01</span></div>
<div class="c" style="left:1489px;top:659px;width:73px;height:25px;line-height:26px;text-align:center">已发布</div>
<div class="ob" style="left:1570px;top:658px;width:78px;height:26px"><svg class="mag" style="left:3px;top:3px" width="16" height="16" viewBox="0 0 16 16"><circle cx="6.5" cy="6.5" r="5" fill="#e2ecf7" stroke="#8e8e8e" stroke-width="1.0"/><path d="M3 5.5 Q6.5 4.6 10 5.5" stroke="#c6d9ec" stroke-width="0.8" fill="none"/><path d="M10.2 10.2 L14.2 14.3" stroke="#767676" stroke-width="2.2" stroke-linecap="round"/><path d="M10.9 10.9 L13.9 14" stroke="#d8d8e8" stroke-width="0.8" stroke-dasharray="0.7 0.9"/></svg><span style="position:absolute;left:24px;top:5px">采购意向</span></div>
<div class="c" style="left:303px;top:686px;width:29px;height:25px;line-height:26px;text-align:center"><span class=n>20</span></div>
<div class="c" style="left:333px;top:686px;width:338px;height:25px;line-height:26px;text-align:left">1</div>
<div class="c" style="left:672px;top:686px;width:106px;height:25px;line-height:26px;text-align:right"><span class=n>1.000000</span></div>
<div class="c" style="left:779px;top:686px;width:214px;height:25px;line-height:26px;text-align:left">民政部机关服务局</div>
<div class="c" style="left:994px;top:686px;width:140px;height:25px;line-height:26px;text-align:center"><span class=n>2020-04-13 14:41:23</span></div>
<div class="c" style="left:1135px;top:686px;width:172px;height:25px;line-height:26px;text-align:center">民政部</div>
<div class="c" style="left:1308px;top:686px;width:73px;height:25px;line-height:26px;text-align:left">民政部</div>
<div class="c" style="left:1382px;top:686px;width:106px;height:25px;line-height:26px;text-align:center"><span class=n>2020-02</span></div>
<div class="c" style="left:1489px;top:686px;width:73px;height:25px;line-height:26px;text-align:center">已发布</div>
<div class="ob" style="left:1570px;top:685px;width:78px;height:26px"><svg class="mag" style="left:3px;top:3px" width="16" height="16" viewBox="0 0 16 16"><circle cx="6.5" cy="6.5" r="5" fill="#e2ecf7" stroke="#8e8e8e" stroke-width="1.0"/><path d="M3 5.5 Q6.5 4.6 10 5.5" stroke="#c6d9ec" stroke-width="0.8" fill="none"/><path d="M10.2 10.2 L14.2 14.3" stroke="#767676" stroke-width="2.2" stroke-linecap="round"/><path d="M10.9 10.9 L13.9 14" stroke="#d8d8e8" stroke-width="0.8" stroke-dasharray="0.7 0.9"/></svg><span style="position:absolute;left:24px;top:5px">采购意向</span></div>
<div class="c" style="left:303px;top:713px;width:29px;height:25px;line-height:26px;text-align:center"><span class=n>21</span></div>
<div class="c" style="left:333px;top:713px;width:338px;height:25px;line-height:26px;text-align:left">1</div>
<div class="c" style="left:672px;top:713px;width:106px;height:25px;line-height:26px;text-align:right"><span class=n>1.000000</span></div>
<div class="c" style="left:779px;top:713px;width:214px;height:25px;line-height:26px;text-align:left">民政部档案资料馆</div>
<div class="c" style="left:994px;top:713px;width:140px;height:25px;line-height:26px;text-align:center"><span class=n>2020-04-13 14:41:23</span></div>
<div class="c" style="left:1135px;top:713px;width:172px;height:25px;line-height:26px;text-align:center">民政部</div>
<div class="c" style="left:1308px;top:713px;width:73px;height:25px;line-height:26px;text-align:left">民政部</div>
<div class="c" style="left:1382px;top:713px;width:106px;height:25px;line-height:26px;text-align:center"><span class=n>2020-03</span></div>
<div class="c" style="left:1489px;top:713px;width:73px;height:25px;line-height:26px;text-align:center">已发布</div>
<div class="ob" style="left:1570px;top:712px;width:78px;height:26px"><svg class="mag" style="left:3px;top:3px" width="16" height="16" viewBox="0 0 16 16"><circle cx="6.5" cy="6.5" r="5" fill="#e2ecf7" stroke="#8e8e8e" stroke-width="1.0"/><path d="M3 5.5 Q6.5 4.6 10 5.5" stroke="#c6d9ec" stroke-width="0.8" fill="none"/><path d="M10.2 10.2 L14.2 14.3" stroke="#767676" stroke-width="2.2" stroke-linecap="round"/><path d="M10.9 10.9 L13.9 14" stroke="#d8d8e8" stroke-width="0.8" stroke-dasharray="0.7 0.9"/></svg><span style="position:absolute;left:24px;top:5px">采购意向</span></div>
<div class="c" style="left:303px;top:740px;width:29px;height:25px;line-height:26px;text-align:center"><span class=n>22</span></div>
<div class="c" style="left:333px;top:740px;width:338px;height:25px;line-height:26px;text-align:left">1</div>
<div class="c" style="left:672px;top:740px;width:106px;height:25px;line-height:26px;text-align:right"><span class=n>1.000000</span></div>
<div class="c" style="left:779px;top:740px;width:214px;height:25px;line-height:26px;text-align:left">民政部</div>
<div class="c" style="left:994px;top:740px;width:140px;height:25px;line-height:26px;text-align:center"><span class=n>2020-04-02 00:55:13</span></div>
<div class="c" style="left:1135px;top:740px;width:172px;height:25px;line-height:26px;text-align:center">民政部</div>
<div class="c" style="left:1308px;top:740px;width:73px;height:25px;line-height:26px;text-align:left"></div>
<div class="c" style="left:1382px;top:740px;width:106px;height:25px;line-height:26px;text-align:center"><span class=n>2020-04</span></div>
<div class="c" style="left:1489px;top:740px;width:73px;height:25px;line-height:26px;text-align:center">已发布</div>
<div class="ob" style="left:1570px;top:739px;width:78px;height:26px"><svg class="mag" style="left:3px;top:3px" width="16" height="16" viewBox="0 0 16 16"><circle cx="6.5" cy="6.5" r="5" fill="#e2ecf7" stroke="#8e8e8e" stroke-width="1.0"/><path d="M3 5.5 Q6.5 4.6 10 5.5" stroke="#c6d9ec" stroke-width="0.8" fill="none"/><path d="M10.2 10.2 L14.2 14.3" stroke="#767676" stroke-width="2.2" stroke-linecap="round"/><path d="M10.9 10.9 L13.9 14" stroke="#d8d8e8" stroke-width="0.8" stroke-dasharray="0.7 0.9"/></svg><span style="position:absolute;left:24px;top:5px">采购意向</span></div>
<div class="c" style="left:303px;top:767px;width:29px;height:25px;line-height:26px;text-align:center"><span class=n>23</span></div>
<div class="c" style="left:333px;top:767px;width:338px;height:25px;line-height:26px;text-align:left">1</div>
<div class="c" style="left:672px;top:767px;width:106px;height:25px;line-height:26px;text-align:right"><span class=n>1.000000</span></div>
<div class="c" style="left:779px;top:767px;width:214px;height:25px;line-height:26px;text-align:left">民政部</div>
<div class="c" style="left:994px;top:767px;width:140px;height:25px;line-height:26px;text-align:center"></div>
<div class="c" style="left:1135px;top:767px;width:172px;height:25px;line-height:26px;text-align:center">民政部</div>
<div class="c" style="left:1308px;top:767px;width:73px;height:25px;line-height:26px;text-align:left">民政部</div>
<div class="c" style="left:1382px;top:767px;width:106px;height:25px;line-height:26px;text-align:center"><span class=n>2020-04</span></div>
<div class="c" style="left:1489px;top:767px;width:73px;height:25px;line-height:26px;text-align:center">草稿</div>
<div class="ob" style="left:1570px;top:766px;width:78px;height:26px"><svg class="mag" style="left:3px;top:3px" width="16" height="16" viewBox="0 0 16 16"><circle cx="6.5" cy="6.5" r="5" fill="#e2ecf7" stroke="#8e8e8e" stroke-width="1.0"/><path d="M3 5.5 Q6.5 4.6 10 5.5" stroke="#c6d9ec" stroke-width="0.8" fill="none"/><path d="M10.2 10.2 L14.2 14.3" stroke="#767676" stroke-width="2.2" stroke-linecap="round"/><path d="M10.9 10.9 L13.9 14" stroke="#d8d8e8" stroke-width="0.8" stroke-dasharray="0.7 0.9"/></svg><span style="position:absolute;left:24px;top:5px">采购意向</span></div>
<div class="a" style="left:303px;top:789px;width:1365px;height:31px;background:#fafafa;border-top:1px solid #ebebeb"></div>
<div class="a" style="left:309px;top:794px;width:51px;height:21px;border:1px solid #d4d4d4;background:#fff"><span class="n a" style="left:6px;top:3px;font-size:13.5px;color:#000;line-height:14px">30</span><svg class="a" style="left:37px;top:5.5px" width="7" height="6" viewBox="0 0 7 6"><path d="M0.3 0 L6.3 0 L3.3 5.6 Z" fill="#000"/></svg></div>
<div class="ps" style="left:367px;top:793px;height:25px"></div>
<div class="ps" style="left:423px;top:793px;height:25px"></div>
<div class="ps" style="left:520px;top:793px;height:25px"></div>
<div class="ps" style="left:576px;top:793px;height:25px"></div>
<svg class="a" style="left:379px;top:800px" width="9" height="11" viewBox="0 0 9 11"><rect x="0" y="0" width="2" height="10" fill="#8d8d8d"/><path d="M2 5 L8 0 L8 10 Z" fill="#8d8d8d"/></svg>
<svg class="a" style="left:406px;top:800px" width="7" height="11" viewBox="0 0 7 11"><path d="M0 5 L6 0 L6 10 Z" fill="#8d8d8d"/></svg>
<div class="lbl" style="left:432px;top:798.5px">第</div>
<div class="a" style="left:446px;top:794px;width:33px;height:21px;border:1px solid #d4d4d4;background:#fff"><span class="n a" style="left:3px;top:3px;font-size:13.5px;color:#000;line-height:14px">1</span></div>
<div class="lbl" style="left:481px;top:798px">共<span class=n>2</span>页</div>
<svg class="a" style="left:533px;top:800px" width="7" height="11" viewBox="0 0 7 11"><path d="M0 0 L6 5 L0 10 Z" fill="#333"/></svg>
<svg class="a" style="left:557px;top:800px" width="10" height="11" viewBox="0 0 10 11"><path d="M0.8 0 L6.4 5 L0.8 10 Z" fill="#333"/><rect x="7" y="0" width="2" height="10" fill="#333"/></svg>
<svg class="a" style="left:580px;top:794px" width="24" height="22" viewBox="0 0 24 22"><path d="M15.3 8.0 A4.6 4.6 0 1 1 11.45 6.63" stroke="#4d4442" stroke-width="1.3" fill="none"/><path d="M11.0 4.6 L14.8 6.3 L11.3 8.7 Z" fill="#4d4442"/></svg>
<div class="lbl" style="left:1557.2px;top:799px">显示<span class=n>1</span>到<span class=n>30,</span>共<span class=n>51</span>记录</div>
<div class="a" style="left:0;top:0;width:2px;height:822px;background:#eef5fd"></div><div class="a" style="left:0;top:821px;width:1668px;height:1px;background:#eef5fd"></div>
</body></html>
